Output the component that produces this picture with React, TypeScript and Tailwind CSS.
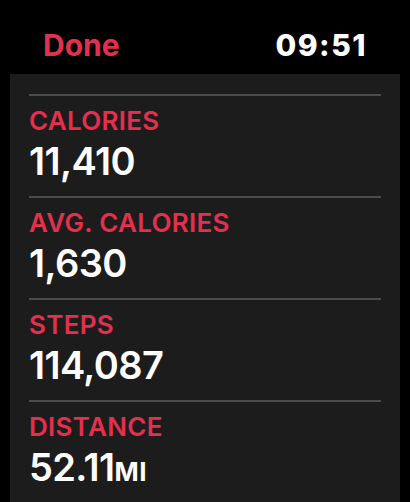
const stats = [
  { label: 'CALORIES', value: '11,410', unit: '' },
  { label: 'AVG. CALORIES', value: '1,630', unit: '' },
  { label: 'STEPS', value: '114,087', unit: '' },
  { label: 'DISTANCE', value: '52.11', unit: 'MI' },
];

function StatRow({ label, value, unit }: { label: string; value: string; unit: string }) {
  return (
    <div className="flex flex-col">
      <div className="h-[2px] bg-[#4b4b4b]" />
      <div className="pt-[10px] text-[26px] leading-[30px] font-semibold tracking-[0.3px] text-[#e3304f]">
        {label}
      </div>
      <div className="mt-[4px] pb-[14px] text-[38px] leading-[42px] font-semibold tracking-[-0.6px] text-white">
        {value}
        {unit && <span className="text-[26px] font-bold tracking-[0.5px]">{unit}</span>}
      </div>
    </div>
  );
}

export default function App() {
  return (
    <div
      className="h-[502px] w-full bg-black flex flex-col overflow-hidden"
      style={{ fontFamily: 'Inter, "Noto Sans", sans-serif' }}
    >
      <header className="h-[74px] shrink-0 flex justify-between pt-[27px] pl-[43px] pr-[43px] text-[30px] leading-[36px] font-bold">
        <span className="text-[#e3304f]">Done</span>
        <span className="text-white font-extrabold tracking-[1.5px]">09:51</span>
      </header>
      <section className="flex-1 mx-[10px] bg-[#1c1c1c] overflow-hidden px-[19px] pt-[20px]">
        <div className="flex flex-col">
          {stats.map((s) => (
            <StatRow key={s.label} label={s.label} value={s.value} unit={s.unit} />
          ))}
        </div>
      </section>
    </div>
  );
}
